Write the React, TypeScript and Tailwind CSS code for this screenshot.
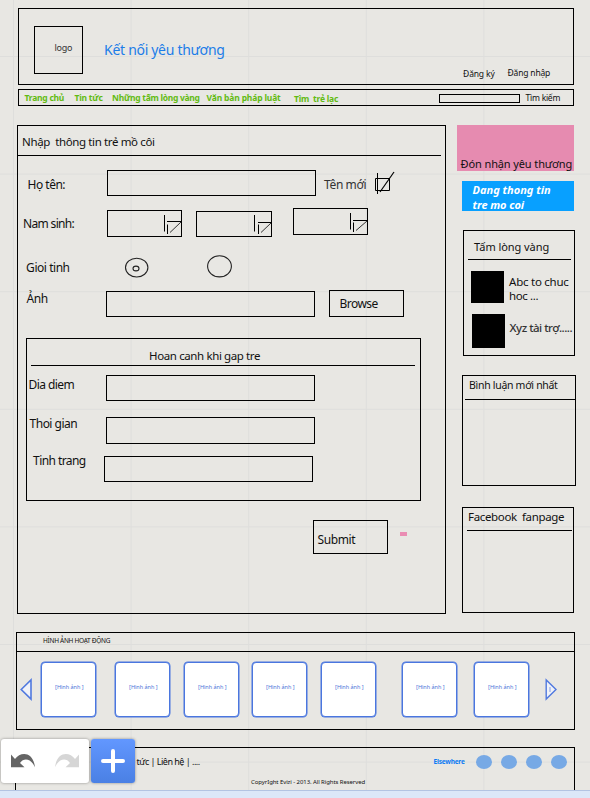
import { useLayoutEffect, useRef, type ReactNode } from 'react';

type TextProps = { text: string; fit: number; className?: string };

/* Single line label whose letter spacing is adjusted so it spans `fit` pixels. */
function T({ text, fit, className = '' }: TextProps) {
  const ref = useRef<HTMLSpanElement>(null);
  useLayoutEffect(() => {
    const el = ref.current;
    if (!el) return;
    el.style.letterSpacing = '0px';
    const natural = el.getBoundingClientRect().width;
    el.style.letterSpacing = `${(fit - natural) / text.length}px`;
  }, [text, fit]);
  return (
    <div className={`shrink-0 whitespace-pre pl-[0.600px] leading-4 ${className}`}>
      <span ref={ref}>{text}</span>
    </div>
  );
}

function Box({ className = '', children }: { className?: string; children?: ReactNode }) {
  return <div className={`shrink-0 border border-black ${className}`}>{children}</div>;
}

function Select({ className = '', gap = 3, bar = 6.5, top }: { className?: string; gap?: number; bar?: number; top: string }) {
  return (
    <Box className={`flex justify-end ${className}`}>
      <svg className={`h-5 w-[17px] shrink-0 overflow-visible ${top}`} viewBox="0 0 17 20" fill="none" stroke="#000">
        <path d={`M.5 0V16.5M${gap + 0.5} 9.5V19M${gap} ${bar}H17`} />
        <path d={`M${gap + 3} 17.5L17 ${bar + 0.5}`} stroke="#333" />
      </svg>
    </Box>
  );
}

const tiles = ['ml-[9px]', 'ml-[19px]', 'ml-[14px]', 'ml-[13px]', 'ml-[14px]', 'ml-[26px]', 'ml-[17px]'];

const arrow = 'M11 14.5L15 19C20 12 33 10.500 35 27.300C31 18.500 24 17.500 20 23L24.500 27.300H11Z';

export default function App() {
  return (
    <div className="relative flex h-[798px] w-[590px] flex-col overflow-hidden bg-[#e8e7e3] bg-[linear-gradient(to_right,#dededc_1px,transparent_1px),linear-gradient(to_bottom,#dededc_1px,transparent_1px)] bg-[length:117.600px_117.600px] bg-[position:13px_56px] font-['Noto_Sans',sans-serif] text-[12px] text-[#111]">
      <header className="ml-[18px] mt-2 flex h-[77px] w-[556px] shrink-0 items-start border border-black">
        <Box className="ml-[15px] mt-[17px] h-12 w-[49px]">
          <T text="logo" fit={17.5} className="ml-[19px] mt-[13px] text-[9px] text-[#333]" />
        </Box>
        <T text="Kết nối yêu thương" fit={120.5} className="ml-[20.500px] mt-[33px] w-[359px] text-[14px] text-[#1c7de8]" />
        <T text="Đăng ký" fit={31.5} className="mt-[57px] w-[44.500px] text-[8.500px]" />
        <T text="Đăng nhập" fit={42.5} className="mt-[55.500px] text-[8.500px]" />
      </header>

      <nav className="ml-[18px] mt-1 flex h-[17px] w-[556px] shrink-0 items-start border border-black text-[8.500px] font-bold text-[#62bb12]">
        <T text="Trang chủ" fit={39.5} className="ml-[5px] w-[50px]" />
        <T text="Tin tức" fit={28} className="w-[37.500px]" />
        <T text="Những tấm lòng vàng" fit={87.5} className="w-[94.500px]" />
        <T text="Văn bản pháp luật" fit={74} className="w-[87.500px]" />
        <T text="Tìm  trẻ lạc" fit={44} className="mt-px w-[145.500px]" />
        <Box className="mt-1 h-[9px] w-[81px]" />
        <T text="Tìm kiếm" fit={34.5} className="ml-[5px] font-normal text-[#111]" />
      </nav>

      <div className="mt-[19px] flex h-[507px] shrink-0 items-start">
        <main className="ml-[17px] h-[489px] w-[429px] shrink-0 border border-black">
          <div className="h-[30px] w-[423px] border-b border-black">
            <T text="Nhập  thông tin trẻ mồ côi" fit={132.5} className="ml-[3.500px] pt-2 text-[11.500px]" />
          </div>

          <div className="flex h-[52px] items-start">
            <T text="Họ tên:" fit={37.5} className="ml-[9px] mt-[21px] w-20" />
            <Box className="mt-[14px] h-[26px] w-[209px]" />
            <T text="Tên mới" fit={42} className="ml-[7.500px] mt-[21px] w-[49.500px] text-[#333]" />
            <svg className="mt-[14px] h-[26px] w-6" viewBox="0 0 24 26" fill="none" stroke="#000">
              <path d="M2.500 8.500H16.500V20.500H2.500ZM4.500 3V24" />
              <path d="M7 22L21 2" strokeWidth="1.200" />
            </svg>
          </div>

          <div className="flex h-10 items-start">
            <T text="Nam sinh:" fit={51} className="ml-[4.500px] mt-2 w-[84.500px]" />
            <Select className="mt-0.5 h-[27px] w-[75px]" top="mt-1" />
            <Select className="ml-[14px] mt-[3px] h-[26px] w-[76px]" gap={4} bar={7.5} top="mt-[3px]" />
            <Select className="ml-[21px] h-[27px] w-[75px]" bar={7.5} top="mt-1" />
          </div>

          <div className="flex h-[42px] items-start">
            <T text="Gioi tinh" fit={43.5} className="ml-[7.500px] mt-3 w-[98.500px]" />
            <svg className="mt-2 h-6 w-[26px]" viewBox="0 0 26 24" fill="none" stroke="#222" strokeWidth="1.100">
              <ellipse cx="12.700" cy="11.600" rx="11.200" ry="9.400" />
              <ellipse cx="12" cy="12.500" rx="3" ry="2.400" />
            </svg>
            <svg className="ml-[56px] mt-1.5 h-6 w-[28px]" viewBox="0 0 28 24" fill="none" stroke="#222" strokeWidth="1.100">
              <ellipse cx="13.500" cy="12.300" rx="11.900" ry="10.600" />
            </svg>
          </div>

          <div className="flex h-12 items-start">
            <T text="Ảnh" fit={21} className="ml-2 mt-px w-20" />
            <Box className="mt-px h-[26px] w-[209px]" />
            <Box className="ml-[14px] h-[27px] w-[75px]">
              <T text="Browse" fit={38} className="ml-[9px] mt-[5px]" />
            </Box>
          </div>

          <Box className="ml-2 h-[163px] w-[395px]">
            <div className="ml-1 h-[27px] w-[384px] border-b border-black">
              <T text="Hoan canh khi gap tre" fit={111} className="ml-[117.500px] pt-[9px] text-[11.500px]" />
            </div>
            <div className="flex h-[51px] items-start">
              <T text="Dia diem" fit={45.5} className="ml-px mt-[11px] w-[78px]" />
              <Box className="mt-[9px] h-[26px] w-[209px]" />
            </div>
            <div className="flex h-[39px] items-start">
              <T text="Thoi gian" fit={47.5} className="-mt-px ml-[2px] w-[77px]" />
              <Box className="h-[27px] w-[209px]" />
            </div>
            <div className="flex items-start">
              <T text="Tinh trang" fit={52.5} className="-mt-[3px] ml-[5.500px] w-[71.500px]" />
              <Box className="h-[26px] w-[209px]" />
            </div>
          </Box>

          <div className="mt-[19px] flex items-start">
            <Box className="ml-[295px] h-[34px] w-[75px]">
              <T text="Submit" fit={37.5} className="ml-[3px] mt-[11px]" />
            </Box>
            <div className="ml-3 mt-3 h-1 w-[7px] bg-[#ea8db3]" />
          </div>
        </main>

        <aside className="ml-[11px] flex w-[120px] shrink-0 flex-col items-start">
          <div className="h-[46px] w-[117px] bg-[#e68bb0]">
            <T text="Đón nhận yêu thương" fit={111.5} className="ml-[3px] pt-[31px] text-[11px]" />
          </div>
          <div className="ml-[5px] mt-[10px] h-[30px] w-[112px] bg-[#08a0ff] pl-[10px] pt-px text-[11px] font-bold italic text-white">
            <T text="Dang thong tin" fit={78} className="h-[14.500px]" />
            <T text="tre mo coi" fit={51.5} className="h-[14px]" />
          </div>

          <Box className="ml-1.5 mt-[19px] h-[126px] w-[112px]">
            <div className="ml-1 h-[29px] w-[103px] border-b border-black">
              <T text="Tấm lòng vàng" fit={75} className="ml-[5.500px] pt-2 text-[11px]" />
            </div>
            <div className="ml-[7px] mt-[11px] flex h-[43px] items-start text-[11.500px]">
              <div className="h-8 w-[33px] bg-black" />
              <div className="ml-[4.500px] mt-[3px]">
                <T text="Abc to chuc" fit={59.5} className="h-[14px]" />
                <T text="hoc ..." fit={29} />
              </div>
            </div>
            <div className="ml-2 flex items-start text-[11.500px]">
              <div className="h-[34px] w-[33px] bg-black" />
              <T text="Xyz tài trợ....." fit={62.5} className="ml-[4px] mt-[6px] font-medium text-[#333]" />
            </div>
          </Box>

          <Box className="ml-[5px] mt-[19px] h-[111px] w-[114px]">
            <div className="ml-0.5 h-6 w-[110px] border-b border-black">
              <T text="Bình luận mới nhất" fit={88.5} className="ml-[3.500px] pt-px text-[10.500px]" />
            </div>
          </Box>

          <Box className="ml-[5px] mt-[21px] h-[106px] w-[112px]">
            <div className="ml-1 h-[23px] w-[105px] border-b border-black">
              <T text="Facebook  fanpage" fit={96} className="ml-[0.500px] pt-px text-[11.500px]" />
            </div>
          </Box>
        </aside>
      </div>

      <section className="ml-4 h-[98px] w-[559px] shrink-0 border border-black">
        <div className="h-[19px] border-b border-black">
          <T text="HÌNH ẢNH HOẠT ĐỘNG" fit={67} className="ml-[25.500px] text-[6.500px]" />
        </div>
        <div className="flex items-start pt-[10px]">
          <svg className="ml-[3px] mt-4 h-6 w-3 shrink-0" viewBox="0 0 12 24" fill="#f0f2f8" stroke="#5079df" strokeWidth="1.600">
            <path d="M1.200 11.500L11 2V21Z" />
          </svg>
          {tiles.map((gap, i) => (
            <div key={i} className={`h-[55px] w-[55px] shrink-0 rounded-[4px] border border-[#4a76df] bg-white shadow-[0_0_0_0.500px_#4a76df] ${gap}`}>
              <T text="[Hình ảnh ]" fit={28.5} className="ml-[12.500px] mt-[16px] text-[5.500px] text-[#4a72d8]" />
            </div>
          ))}
          <svg className="ml-4 mt-4 h-6 w-3 shrink-0" viewBox="0 0 12 24" fill="#f0f2f8" stroke="#5079df" strokeWidth="1.400">
            <path d="M1.200 2V21L11 11.500Z" />
            <path d="M5 9V14" strokeWidth="0.700" />
          </svg>
        </div>
      </section>

      <footer className="ml-[15px] mt-[17px] h-[43px] w-[560px] shrink-0 border border-b-0 border-black">
        <div className="flex h-[27px] items-start">
          <T text="|" fit={3} className="ml-[73px] mt-[5px] w-[47px] text-[9px]" />
          <T text="tức | Liên hệ | ...." fit={63} className="mt-[6px] w-[297px] text-[9px]" />
          <T text="Elsewhere" fit={31} className="mt-[5.500px] w-[42.500px] text-[6.500px] font-bold text-[#0a7af5]" />
          <div className="mt-[7px] flex gap-[9px]">
            {[0, 1, 2, 3].map((i) => (
              <div key={i} className="h-[14px] w-4 rounded-[50%] bg-[#77a9e5]" />
            ))}
          </div>
        </div>
        <T text="CopyrIght Evizi - 2013. All Rights Reserved" fit={114} className="-mt-px ml-[234.500px] text-[6px]" />
      </footer>
      <div className="h-2 shrink-0 border-t border-[#b3c4e2] bg-[#dce8f8]" />

      <div className="absolute left-px top-[739px] flex gap-0.5">
        <div className="h-11 w-[88px] rounded-[3px] bg-white shadow-[0_0_3px_rgba(0,0,0,0.400)]">
          <svg className="h-11 w-[88px]" viewBox="1 -1 88 44">
            <path d={arrow} fill="#656565" />
            <path d={arrow} fill="#d6d6d6" transform="translate(90 0) scale(-1 1)" />
          </svg>
        </div>
        <div className="h-11 w-11 rounded-[3px] bg-gradient-to-b from-[#6297ff] to-[#4a80e4] shadow-[0_0_3px_rgba(0,0,0,0.400)]">
          <svg className="h-11 w-11" viewBox="0 0 44 44" stroke="#fff" strokeWidth="4" strokeLinecap="round">
            <path d="M22 12V32M12 22H32" />
          </svg>
        </div>
      </div>
    </div>
  );
}
